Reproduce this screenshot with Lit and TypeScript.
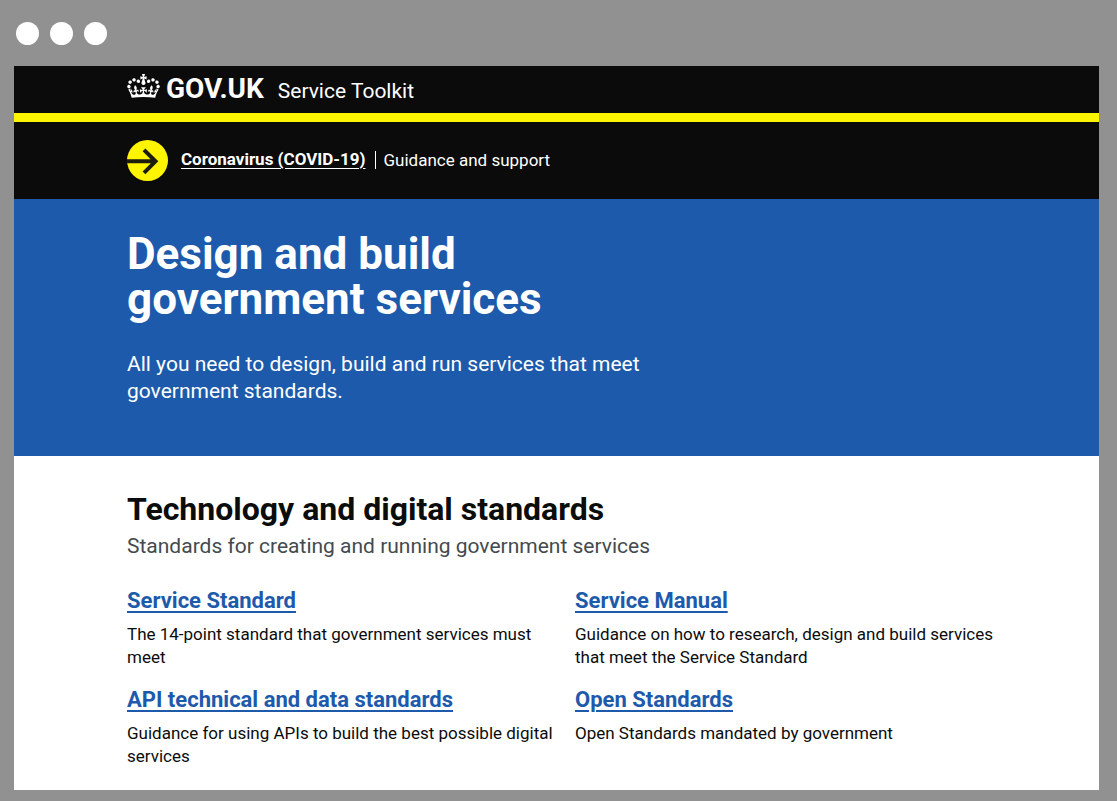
import { LitElement, html, css } from "lit";
import { customElement } from "lit/decorators.js";

interface Topic {
  title: string;
  text: string;
}

const topics: Topic[] = [
  { title: "Service Standard", text: "The 14-point standard that government services must meet" },
  { title: "Service Manual", text: "Guidance on how to research, design and build services that meet the Service Standard" },
  { title: "API technical and data standards", text: "Guidance for using APIs to build the best possible digital services" },
  { title: "Open Standards", text: "Open Standards mandated by government" },
];

@customElement("app-root")
export class AppRoot extends LitElement {
  static styles = css`
    :host {
      display: flex;
      flex-direction: column;
      box-sizing: border-box;
      min-height: 100vh;
      padding: 0 18px 11px 14px;
      background: #919191;
      color: #0b0c0c;
      font-family: Roboto, "Noto Sans", sans-serif;
      font-size: 17px;
      line-height: 23px;
    }
    h1, h2, h3, p { margin: 0; }
    .dots {
      display: flex;
      align-items: center;
      gap: 11px;
      height: 66px;
      padding-left: 2px;
    }
    .dot {
      width: 23px;
      height: 23px;
      border-radius: 50%;
      background: #fff;
    }
    .page {
      flex: 1;
      background: #fff;
    }
    .wrap {
      max-width: 886px;
      padding: 0 85px 0 113px;
    }
    .header {
      background: #0b0b0b;
      border-bottom: 9px solid #fff500;
    }
    .brand {
      display: flex;
      align-items: baseline;
      padding-top: 8px;
      height: 39px;
      color: #fff;
      text-decoration: none;
    }
    .crown { width: 33px; height: 24px; margin-right: 6px; }
    .logotype { font-size: 28px; line-height: 30px; font-weight: 700; }
    .product { margin-left: 14px; font-size: 21px; }
    .notice { background: #0b0b0b; color: #fff; }
    .notice-row {
      display: flex;
      align-items: center;
      height: 77px;
    }
    .arrow { width: 41px; height: 41px; margin-right: 13px; }
    .notice-copy { display: flex; align-items: center; padding-bottom: 2px; }
    .notice-link { color: #fff; font-weight: 700; text-underline-offset: 3px; }
    .notice-text {
      margin-left: 9px;
      padding-left: 8px;
      border-left: 1px solid #fff;
      line-height: 18px;
    }
    .hero { background: #1d5aab; color: #fff; }
    .hero-body { padding-top: 33px; padding-bottom: 51px; }
    .hero-title { max-width: 520px; font-size: 44px; line-height: 45px; }
    .hero-lead { max-width: 570px; margin-top: 29px; font-size: 21px; line-height: 27px; }
    .standards { padding-top: 34px; padding-bottom: 14px; }
    .section-title { font-size: 32px; line-height: 38px; }
    .section-lead { font-size: 21px; line-height: 36px; color: #434a4e; }
    .topics {
      display: grid;
      grid-template-columns: 1fr 1fr;
      gap: 8px 10px;
      margin-top: 22px;
    }
    .topic-title { font-size: 22px; line-height: 30px; }
    .topic-link { color: #1d5aab; text-decoration-thickness: 2px; text-underline-offset: 3px; }
    .topic-text { margin-top: 7px; padding-bottom: 8px; }
  `;

  render() {
    return html`
      <div class="dots" aria-hidden="true">
        <span class="dot"></span><span class="dot"></span><span class="dot"></span>
      </div>
      <div class="page">
        <header class="header">
          <div class="wrap">
            <a class="brand" href="#">
              <svg class="crown" viewBox="0 0 132 97" aria-hidden="true">
                <path fill="currentColor" fill-rule="evenodd" d="M25 30.2c3.5 1.5 7.7-.2 9.1-3.7 1.5-3.6-.2-7.8-3.9-9.2-3.6-1.4-7.6.3-9.1 3.9-1.4 3.5.3 7.5 3.9 9zM9 39.5c3.6 1.5 7.8-.2 9.2-3.7 1.5-3.6-.2-7.8-3.9-9.1-3.6-1.5-7.6.2-9.1 3.8-1.4 3.5.3 7.5 3.8 9zM4.4 57.2c3.5 1.5 7.7-.2 9.1-3.8 1.5-3.6-.2-7.7-3.9-9.1-3.5-1.5-7.6.3-9.1 3.8-1.4 3.5.3 7.6 3.9 9.1zm38.3-21.4c3.5 1.5 7.7-.2 9.1-3.8 1.5-3.6-.2-7.7-3.9-9.1-3.6-1.5-7.6.3-9.1 3.8-1.3 3.6.4 7.7 3.9 9.1zm64.4-5.6c-3.6 1.5-7.8-.2-9.1-3.7-1.5-3.6.2-7.8 3.8-9.2 3.6-1.4 7.7.3 9.2 3.9 1.3 3.5-.4 7.5-3.9 9zm15.9 9.3c-3.6 1.5-7.7-.2-9.1-3.7-1.5-3.6.2-7.8 3.7-9.1 3.6-1.5 7.7.2 9.2 3.8 1.5 3.5-.3 7.5-3.8 9zm4.7 17.7c-3.6 1.5-7.8-.2-9.2-3.8-1.5-3.6.2-7.7 3.9-9.1 3.6-1.5 7.7.3 9.2 3.8 1.3 3.5-.4 7.6-3.9 9.1zM89.3 35.8c-3.6 1.5-7.8-.2-9.2-3.8-1.4-3.6.2-7.7 3.9-9.1 3.6-1.5 7.7.3 9.2 3.8 1.4 3.6-.3 7.7-3.9 9.1zM69.7 17.7l8.9 4.7V9.3l-8.9 2.8c-.2-.3-.5-.6-.9-.9L72.4 0H59.6l3.5 11.2c-.3.3-.6.5-.9.9l-8.8-2.8v13.1l8.8-4.7c.3.3.6.7.9.9l-5 15.4v.1c-.2.8-.4 1.6-.4 2.4 0 4.1 3.1 7.5 7 8.1h.2c.3 0 .7.1 1 .1.4 0 .7 0 1-.1h.2c4-.6 7.1-4.1 7.1-8.1 0-.8-.1-1.7-.4-2.4V34l-5.1-15.4c.4-.2.7-.6 1-.9zM66 92.8c16.9 0 32.8 1.1 47.1 3.2 4-16.9 8.9-26.7 14-33.5l-9.6-3.4c1 4.9 1.1 7.2 0 10.2-1.5-1.4-3-4.3-4.2-8.7L108.6 76c2.8-2 5-3.2 7.5-3.3-4.4 9.4-10 11.9-13.6 11.2-4.3-.8-6.3-4.6-5.6-7.9 1-4.7 5.7-5.9 8-.5 4.3-8.7-3-11.4-7.6-8.8 7.1-7.2 7.9-13.5 2.1-21.1-8 6.1-8.1 12.3-4.5 20.8-4.7-5.4-12.1-2.5-9.5 6.2 3.4-5.2 7.9-2 7.2 3.1-.6 4.3-6.4 7.8-13.5 7.2-10.3-.9-10.9-8-11.2-13.8 2.5-.5 7.1 1.8 11 7.3L80.2 60c-4.1 4.4-8 5.3-12.3 5.4 1.4-4.4 8-11.6 8-11.6H55.5s6.4 7.2 7.9 11.6c-4.2-.1-8-1-12.3-5.4l1.4 16.4c3.9-5.5 8.5-7.7 10.9-7.3-.3 5.8-.9 12.8-11.1 13.8-7.2.6-12.9-2.9-13.5-7.2-.7-5 3.8-8.3 7.1-3.1 2.7-8.7-4.6-11.6-9.4-6.2 3.7-8.5 3.6-14.7-4.6-20.8-5.8 7.6-5 13.9 2.2 21.1-4.7-2.6-11.9.1-7.7 8.8 2.3-5.5 7.1-4.2 8.1.5.7 3.3-1.3 7.1-5.7 7.9-3.5.7-9-1.8-13.5-11.2 2.5.1 4.7 1.3 7.5 3.3l-4.7-15.4c-1.2 4.4-2.7 7.2-4.3 8.7-1.1-3-.9-5.3 0-10.2l-9.5 3.4c5 6.9 9.9 16.7 14 33.5 14.8-2.1 30.8-3.2 47.7-3.2z"/>
              </svg>
              <span class="logotype">GOV.UK</span>
              <span class="product">Service Toolkit</span>
            </a>
          </div>
        </header>
        <section class="notice">
          <div class="wrap notice-row">
            <svg class="arrow" viewBox="0 0 41 41" aria-hidden="true">
              <circle cx="20.5" cy="20.5" r="20.5" fill="#fff500" />
              <path d="M0 21.3H29M17 9.8L28.5 21.3L17 32.8" fill="none" stroke="#1d1d0b" stroke-width="4" />
            </svg>
            <div class="notice-copy">
              <a class="notice-link" href="#">Coronavirus (COVID-19)</a>
              <span class="notice-text">Guidance and support</span>
            </div>
          </div>
        </section>
        <section class="hero">
          <div class="wrap hero-body">
            <h1 class="hero-title">Design and build government services</h1>
            <p class="hero-lead">All you need to design, build and run services that meet government standards.</p>
          </div>
        </section>
        <main class="wrap standards">
          <h2 class="section-title">Technology and digital standards</h2>
          <p class="section-lead">Standards for creating and running government services</p>
          <div class="topics">
            ${topics.map(
              (t) => html`
                <article>
                  <h3 class="topic-title"><a class="topic-link" href="#">${t.title}</a></h3>
                  <p class="topic-text">${t.text}</p>
                </article>
              `
            )}
          </div>
        </main>
      </div>
    `;
  }
}
